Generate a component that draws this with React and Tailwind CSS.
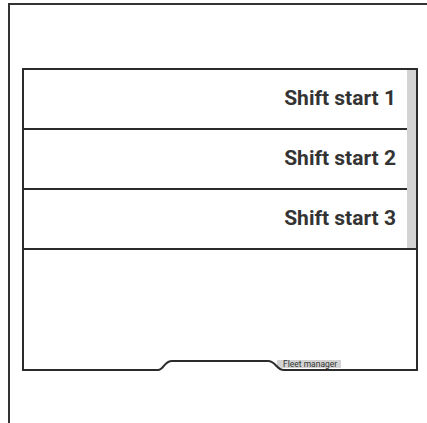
import React from "react";

const shifts = ["Shift start 1", "Shift start 2", "Shift start 3"];

export default function App() {
  return (
    <div className="h-[423px] w-[427px] overflow-hidden bg-white" style={{ fontFamily: "Roboto, 'Liberation Sans', sans-serif" }}>
      {/* outer frame */}
      <div className="ml-2 mt-[3px] h-[430px] w-[430px] border-l-2 border-t-2 border-[#333]">
        {/* list panel */}
        <div className="relative ml-3 mt-[63px] h-[302px] w-[396px] border-x-2 border-t-2 border-[#2b2b2b]">
          <div className="flex">
            <div className="flex-1">
              {shifts.map((s) => (
                <div
                  key={s}
                  className="flex h-[60px] items-center justify-end border-b-2 border-[#2b2b2b] pr-[20px] text-[21px] font-bold text-[#333]"
                >
                  {s}
                </div>
              ))}
            </div>
          </div>
          {/* scrollbar */}
          <div className="absolute right-0 top-0 h-[178px] w-[9px] bg-[#d2d3d2]" />

          {/* bottom notch edge */}
          <div className="absolute left-[253px] top-[290px] flex h-[8px] items-center bg-[#d2d3d2] pl-[6px] pr-[4px] text-[8.5px] leading-none text-[#333]">
            Fleet manager
          </div>
          <svg className="absolute -left-[2px] top-[288px]" width="396" height="14" viewBox="0 0 396 14">
            <path
              d="M0 12 H136 C142 12 142 3 150 3 H246 C254 3 254 12 262 12 H396"
              fill="none"
              stroke="#2b2b2b"
              strokeWidth="2"
            />
          </svg>
        </div>
      </div>
    </div>
  );
}
